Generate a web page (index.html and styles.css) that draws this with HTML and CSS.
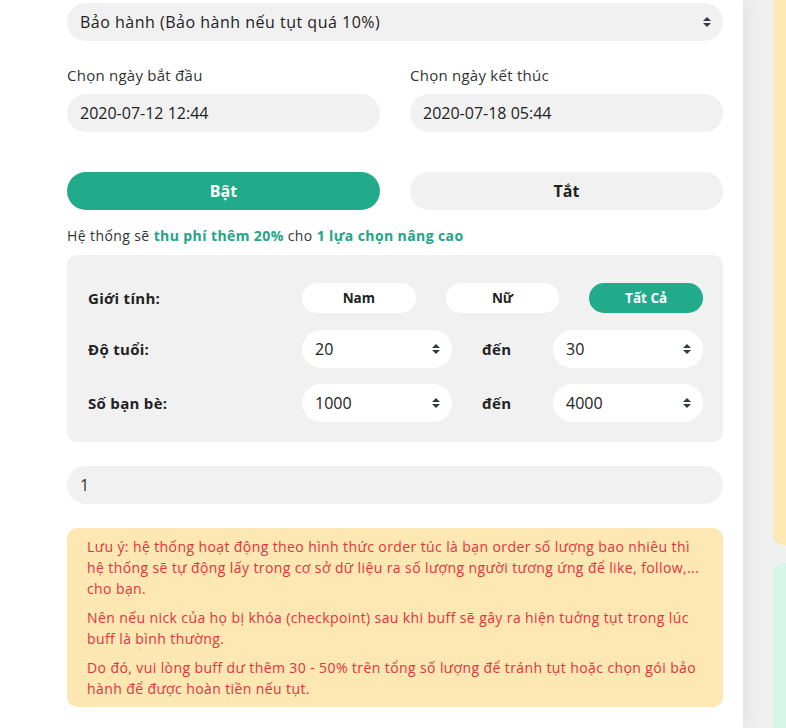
FILE: index.html
```html
<!DOCTYPE html>
<html lang="vi">
<head>
<meta charset="utf-8">
<link rel="stylesheet" href="styles.css">
</head>
<body>
<div class="page">
  <main class="panel">
    <div class="control select-box">
      <span>Bảo hành (Bảo hành nếu tụt quá 10%)</span>
      <svg class="caret" width="8" height="10" viewBox="0 0 8 10"><polygon points="0,4 4,0 8,4"/><polygon points="0,6 4,10 8,6"/></svg>
    </div>

    <div class="two-col dates">
      <div class="field">
        <label class="label">Chọn ngày bắt đầu</label>
        <div class="control">2020-07-12 12:44</div>
      </div>
      <div class="field">
        <label class="label">Chọn ngày kết thúc</label>
        <div class="control">2020-07-18 05:44</div>
      </div>
    </div>

    <div class="two-col toggles">
      <div class="btn btn-on">Bật</div>
      <div class="btn btn-off">Tắt</div>
    </div>

    <p class="fee">Hệ thống sẽ <b>thu phí thêm 20%</b> cho <b>1 lựa chọn nâng cao</b></p>

    <div class="advanced">
      <div class="row">
        <div class="row-label">Giới tính:</div>
        <div class="genders">
          <div class="pill">Nam</div>
          <div class="pill">Nữ</div>
          <div class="pill pill-active">Tất Cả</div>
        </div>
      </div>
      <div class="row row-range">
        <div class="row-label">Độ tuổi:</div>
        <div class="range">
          <div class="mini-select"><span>20</span><svg class="caret" width="8" height="10" viewBox="0 0 8 10"><polygon points="0,4 4,0 8,4"/><polygon points="0,6 4,10 8,6"/></svg></div>
          <div class="to">đến</div>
          <div class="mini-select"><span>30</span><svg class="caret" width="8" height="10" viewBox="0 0 8 10"><polygon points="0,4 4,0 8,4"/><polygon points="0,6 4,10 8,6"/></svg></div>
        </div>
      </div>
      <div class="row row-range">
        <div class="row-label">Số bạn bè:</div>
        <div class="range">
          <div class="mini-select"><span>1000</span><svg class="caret" width="8" height="10" viewBox="0 0 8 10"><polygon points="0,4 4,0 8,4"/><polygon points="0,6 4,10 8,6"/></svg></div>
          <div class="to">đến</div>
          <div class="mini-select"><span>4000</span><svg class="caret" width="8" height="10" viewBox="0 0 8 10"><polygon points="0,4 4,0 8,4"/><polygon points="0,6 4,10 8,6"/></svg></div>
        </div>
      </div>
    </div>

    <div class="control qty">1</div>

    <div class="alert">
      <p>Lưu ý: hệ thống hoạt động theo hình thức order túc là bạn order số lượng bao nhiêu thì hệ thống sẽ tự động lấy trong cơ sở dữ liệu ra số lượng người tương ứng để like, follow,... cho bạn.</p>
      <p>Nên nếu nick của họ bị khóa (checkpoint) sau khi buff sẽ gây ra hiện tuởng tụt trong lúc buff là bình thường.</p>
      <p>Do đó, vui lòng buff dư thêm 30 - 50% trên tổng số lượng để tránh tụt hoặc chọn gói bảo hành để được hoàn tiền nếu tụt.</p>
    </div>
  </main>
  <aside class="side">
    <div class="card card-yellow"></div>
    <div class="card card-mint"></div>
  </aside>
</div>
</body>
</html>
```

FILE: styles.css
```css
* { box-sizing: border-box; }
html, body {
  margin: 0;
  padding: 0;
  background: #f0f0f0;
  height: 100%;
  overflow: hidden;
}
body {
  font-family: "Open Sans", "Liberation Sans", sans-serif;
  color: #2b2b2b;
}
.page {
  display: flex;
  height: 728px;
}
.panel {
  width: 743px;
  flex: none;
  background: #fff;
  padding: 3px 20px 0 67px;
  box-shadow: 3px 0 18px rgba(0, 0, 0, 0.07);
  position: relative;
  z-index: 1;
}
.control {
  height: 38px;
  border-radius: 19px;
  background: #f1f1f1;
  display: flex;
  align-items: center;
  padding: 0 13px;
  font-size: 16px;
  color: #222;
}
.select-box {
  justify-content: space-between;
  padding-right: 12px;
  letter-spacing: 0.5px;
}
.caret { fill: #343a40; flex: none; }
.two-col {
  display: grid;
  grid-template-columns: 1fr 1fr;
  column-gap: 30px;
}
.dates { margin-top: 24px; }
.label {
  display: block;
  height: 20px;
  line-height: 20px;
  font-size: 15px;
  letter-spacing: 0.25px;
  color: #333;
  margin-bottom: 9px;
}
.toggles { margin-top: 40px; }
.btn {
  height: 38px;
  border-radius: 19px;
  display: flex;
  align-items: center;
  justify-content: center;
  font-weight: 700;
  font-size: 16px;
}
.btn-on { background: #21ab8a; color: #fff; }
.btn-off { background: #f1f1f1; color: #222; }
.fee {
  margin: 16px 0 0;
  font-size: 14px;
  letter-spacing: 0.4px;
  line-height: 20px;
  color: #333;
}
.fee b { color: #21a487; font-weight: 700; }
.advanced {
  margin-top: 9px;
  background: #f1f1f1;
  border-radius: 10px;
  padding: 28px 20px 20px 21px;
}
.row {
  display: grid;
  grid-template-columns: 214px 1fr;
  align-items: center;
}
.row + .row { margin-top: 17px; }
.row-range + .row-range { margin-top: 16px; }
.row-label {
  font-weight: 700;
  font-size: 15px;
  letter-spacing: 0.3px;
  color: #222;
}
.genders {
  display: grid;
  grid-template-columns: 1fr 1fr 1fr;
  column-gap: 30px;
}
.pill {
  height: 30px;
  border-radius: 15px;
  background: #fff;
  display: flex;
  align-items: center;
  justify-content: center;
  font-weight: 700;
  font-size: 13.5px;
  color: #222;
}
.pill-active { background: #21ab8a; color: #fff; }
.range {
  display: grid;
  grid-template-columns: 150px 1fr 150px;
  align-items: center;
}
.mini-select {
  height: 38px;
  border-radius: 19px;
  background: #fff;
  display: flex;
  align-items: center;
  justify-content: space-between;
  padding: 0 12px 0 13px;
  font-size: 16px;
  color: #222;
}
.to {
  padding-left: 30px;
  font-weight: 700;
  font-size: 15px;
  letter-spacing: 0.3px;
  color: #222;
}
.qty { margin-top: 24px; color: #333; }
.alert {
  margin-top: 24px;
  background: #fde7b2;
  border-radius: 10px;
  padding: 8px 20px 8px 20px;
  color: #e5323e;
  font-size: 14px;
  letter-spacing: 0.4px;
  line-height: 21px;
}
.alert p { margin: 0; }
.alert p + p { margin-top: 8px; }
.side {
  flex: 1;
  margin-left: 30px;
  display: flex;
  flex-direction: column;
  gap: 18px;
}
.card-yellow {
  height: 545px;
  background: #fde7b2;
  border-radius: 0 0 0 10px;
}
.card-mint {
  flex: 1;
  background: #d6f7e8;
  border-radius: 10px 0 0 0;
}
```
